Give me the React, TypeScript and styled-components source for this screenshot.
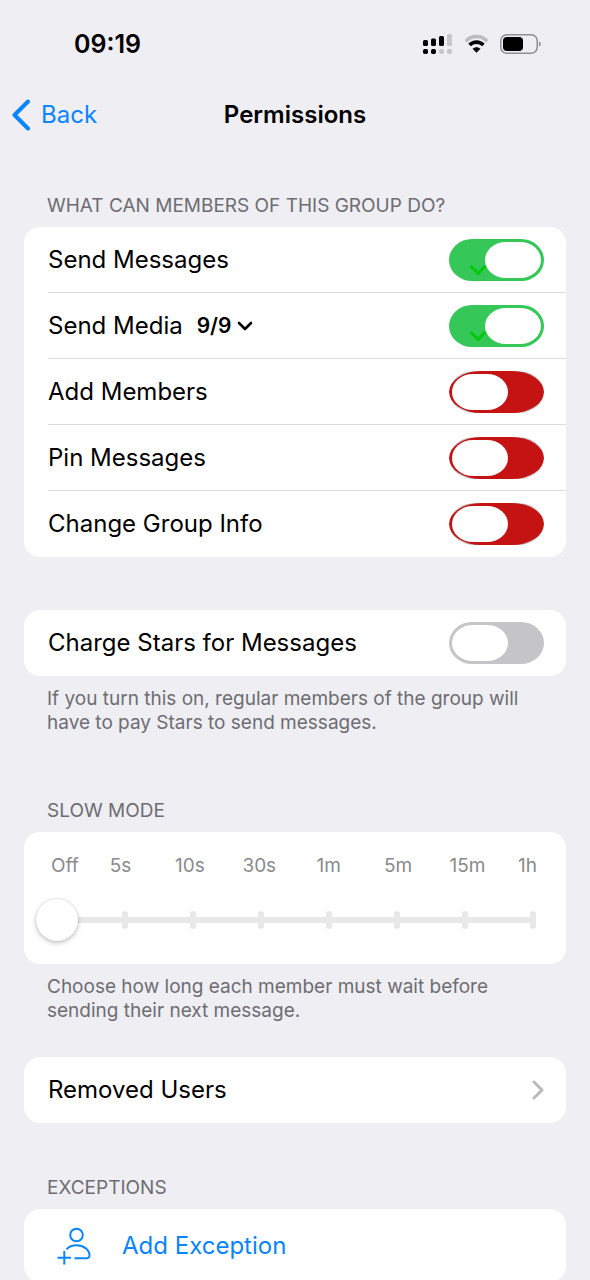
import React, { useState } from "react";
import styled, { createGlobalStyle, css } from "styled-components";

const GlobalStyle = createGlobalStyle`
  *, *::before, *::after { box-sizing: border-box; }
  html { scrollbar-width: none; }
  body {
    margin: 0;
    background: #efeef3;
    color: #000;
    font-family: Inter, "Liberation Sans", sans-serif;
    -webkit-font-smoothing: antialiased;
  }
  button, input { font: inherit; color: inherit; }
`;

const Screen = styled.div`
  height: 100vh;
  overflow-y: auto;
  scrollbar-width: none;
`;

const StatusBar = styled.header`
  display: flex;
  align-items: center;
  justify-content: space-between;
  height: 88px;
  padding: 0 49px 0 74px;
`;

const Clock = styled.time`
  font-size: 25px;
  font-weight: 600;
  line-height: 32px;
`;

const StatusIcons = styled.div`
  display: flex;
  align-items: center;
  gap: 11px;
`;

const NavBar = styled.nav`
  display: grid;
  grid-template-columns: 1fr auto 1fr;
  align-items: center;
  height: 54px;
  padding: 0 12px;
`;

const BackLink = styled.a`
  display: flex;
  align-items: center;
  gap: 10px;
  justify-self: start;
  color: #0a84ff;
  font-size: 24px;
  line-height: 32px;
  text-decoration: none;
`;

const Title = styled.h1`
  margin: 0;
  font-size: 24px;
  font-weight: 600;
  line-height: 32px;
`;

const Content = styled.main`
  padding: 0 24px;
`;

const Section = styled.section<{ $gap: number }>`
  margin-top: ${(p) => p.$gap}px;
`;

const SectionTitle = styled.h2`
  margin: 0 0 9px;
  padding: 0 23px;
  color: #6d6d72;
  font-size: 19px;
  font-weight: 400;
  line-height: 24px;
  text-transform: uppercase;
`;

const Footnote = styled.p`
  margin: 11px 0 0;
  padding: 0 23px;
  color: #6d6d72;
  font-size: 19px;
  line-height: 24px;
`;

const Card = styled.div`
  overflow: hidden;
  border-radius: 16px;
  background: #fff;
`;

const rowBase = css`
  display: flex;
  align-items: center;
  width: 100%;
  height: 66px;
  font-size: 24px;
  line-height: 32px;
`;

const SwitchRow = styled.div`
  ${rowBase}
  width: auto;
  margin-left: 24px;
  padding-right: 22px;

  &:not(:last-child) {
    border-bottom: 1px solid #dcdbe0;
  }
`;

const RowLabel = styled.label<{ $inline?: boolean }>`
  margin-right: ${(p) => (p.$inline ? "14px" : "auto")};
`;

const CountButton = styled.button`
  display: flex;
  align-items: center;
  gap: 5px;
  margin: 0 auto 0 0;
  padding: 0;
  border: 0;
  background: none;
  font-size: 21px;
  font-weight: 600;
  line-height: 32px;
`;

const LinkRow = styled.button<{ $accent?: boolean }>`
  ${rowBase}
  justify-content: ${(p) => (p.$accent ? "flex-start" : "space-between")};
  gap: 31px;
  height: ${(p) => (p.$accent ? 73 : 66)}px;
  padding: ${(p) => (p.$accent ? "0 33px" : "0 22px 0 24px")};
  border: 0;
  background: none;
  color: ${(p) => (p.$accent ? "#0a84ff" : "#000")};
  text-align: left;
`;

type Tone = "permission" | "plain";

const Toggle = styled.input<{ $tone: Tone }>`
  appearance: none;
  position: relative;
  flex: none;
  overflow: hidden;
  width: 95px;
  height: 42px;
  margin: 0;
  border-radius: ${(p) => (p.$tone === "permission" ? "26px / 21px" : "23px / 21px")};
  background: #c5c5c7;

  &::before {
    content: "";
    position: absolute;
    z-index: 1;
    top: 3px;
    left: 3px;
    width: 56px;
    height: 36px;
    border-radius: 21px / 18px;
    background: #fff;
  }

  &::after {
    content: "";
    position: absolute;
    inset: 0;
    border-radius: 32px / 21px;
    background: ${(p) => (p.$tone === "permission" ? "#c51314" : "none")};
  }

  &:checked {
    border-radius: 23px / 21px;
    background: #36c759;
  }

  &:checked::before {
    left: 36px;
  }

  &:checked::after {
    inset: 22px auto auto 23px;
    width: 12px;
    height: 12px;
    border: solid #00c80c;
    border-width: 0 3px 3px 0;
    border-radius: 0;
    background: none;
    transform: rotate(45deg);
  }
`;

const SlowModePanel = styled(Card)`
  padding: 22px 12px;
`;

const StepLabels = styled.div`
  display: flex;
  justify-content: space-between;
  padding: 0 17px 0 15px;
  color: #8a8a8e;
  font-size: 19px;
  line-height: 24px;
`;

const StepLabel = styled.span`
  display: flex;
  justify-content: center;
  width: 0;

  &:first-child { justify-content: flex-start; }
  &:last-child { justify-content: flex-end; }
`;

const SliderStack = styled.div`
  display: grid;
  align-items: center;
  height: 44px;
  margin-top: 20px;

  & > * { grid-area: 1 / 1; }
`;

const Ticks = styled.div`
  display: flex;
  align-items: center;
  justify-content: space-between;
  margin: 0 18px;
  background: linear-gradient(#e8e8e9, #e8e8e9) center / 100% 6px no-repeat;
`;

const Tick = styled.span`
  width: 6px;
  height: 18px;
  border-radius: 3px;
  background: #e8e8e9;
`;

const Range = styled.input`
  appearance: none;
  width: 100%;
  height: 42px;
  margin: 0;
  background: none;

  &::-webkit-slider-thumb {
    appearance: none;
    width: 42px;
    height: 42px;
    border-radius: 50%;
    background: #fff;
    box-shadow: 0 2px 5px rgba(0, 0, 0, 0.22), 0 0 2px rgba(0, 0, 0, 0.16);
  }
`;

const SignalIcon = () => (
  <svg width="30" height="21" viewBox="0 0 30 21" aria-hidden="true">
    <g fill="#000">
      <rect x="0" y="6" width="5" height="6" rx="1.5" />
      <rect x="8" y="4.5" width="5" height="7.5" rx="1.5" />
      <rect x="16" y="2" width="5" height="10" rx="1.5" />
      <rect x="0" y="15" width="5" height="5" rx="1.7" />
      <rect x="8" y="15" width="5" height="5" rx="1.7" />
    </g>
    <g fill="#c6c6ca">
      <rect x="24" y="0" width="5" height="12" rx="1.5" />
      <rect x="16" y="15" width="5" height="5" rx="2" />
      <rect x="24" y="15" width="5" height="5" rx="2" />
    </g>
  </svg>
);

const WifiIcon = () => (
  <svg width="25" height="20" viewBox="0 0 25 20" fill="none" aria-hidden="true">
    <path d="M1.8 7.2C7.6.9 17.4.9 23.2 7.2" stroke="#bdbdc1" strokeWidth="3.6" />
    <path d="M5.6 11.1c3.8-4 10-4 13.8 0" stroke="#000" strokeWidth="3.6" />
    <path d="M12.5 18.8 8.5 14.8c2.3-2.2 5.7-2.2 8 0z" fill="#000" />
  </svg>
);

const BatteryIcon = () => (
  <svg width="41" height="20" viewBox="0 0 41 20" aria-hidden="true">
    <rect x="0.75" y="0.75" width="36.5" height="18.5" rx="6" fill="none" stroke="#8f8f93" strokeWidth="1.5" />
    <rect x="3" y="3" width="20" height="14" rx="4" fill="#000" />
    <path d="M39 7.5c2.400 1 2.400 4 0 5z" fill="#8f8f93" />
  </svg>
);

const BackIcon = () => (
  <svg width="19" height="32" viewBox="0 0 19 32" fill="none" aria-hidden="true">
    <path d="M16 2.500 2.500 16 16 29.500" stroke="#0a84ff" strokeWidth="4" strokeLinecap="round" strokeLinejoin="round" />
  </svg>
);

const DownIcon = () => (
  <svg width="16" height="10" viewBox="0 0 16 10" fill="none" aria-hidden="true">
    <path d="m2 2 6 6 6-6" stroke="#000" strokeWidth="2.6" strokeLinecap="round" strokeLinejoin="round" />
  </svg>
);

const ForwardIcon = () => (
  <svg width="12" height="20" viewBox="0 0 12 20" fill="none" aria-hidden="true">
    <path d="m2 2 8 8-8 8" stroke="#b9b9bc" strokeWidth="3" strokeLinecap="round" strokeLinejoin="round" />
  </svg>
);

const AddUserIcon = () => (
  <svg width="34" height="38" viewBox="0 0 34 38" fill="none" stroke="#0a84ff" strokeWidth="2" aria-hidden="true">
    <circle cx="19.5" cy="8" r="6.3" />
    <path d="M9.500 22.300c2.200-2.500 5.800-4 10-4 7 0 12.700 4.200 13 9.700.1 2.200-.8 3.200-2.500 3.200H17.500" />
    <path d="M.5 30.800h13.500M7.300 24v13.500" />
  </svg>
);

const permissions = [
  { id: "send-messages", label: "Send Messages", on: true },
  { id: "send-media", label: "Send Media", on: true, count: "9/9" },
  { id: "add-members", label: "Add Members", on: false },
  { id: "pin-messages", label: "Pin Messages", on: false },
  { id: "change-info", label: "Change Group Info", on: false },
];

const delays = ["Off", "5s", "10s", "30s", "1m", "5m", "15m", "1h"];

export default function App() {
  const [delay, setDelay] = useState(0);

  return (
    <Screen>
      <GlobalStyle />
      <StatusBar>
        <Clock>09:19</Clock>
        <StatusIcons>
          <SignalIcon />
          <WifiIcon />
          <BatteryIcon />
        </StatusIcons>
      </StatusBar>
      <NavBar>
        <BackLink href="#back">
          <BackIcon />
          Back
        </BackLink>
        <Title>Permissions</Title>
      </NavBar>
      <Content>
        <Section $gap={52}>
          <SectionTitle>What can members of this group do?</SectionTitle>
          <Card>
            {permissions.map(({ id, label, on, count }) => (
              <SwitchRow key={id}>
                <RowLabel htmlFor={id} $inline={Boolean(count)}>
                  {label}
                </RowLabel>
                {count && (
                  <CountButton type="button">
                    {count}
                    <DownIcon />
                  </CountButton>
                )}
                <Toggle id={id} type="checkbox" role="switch" defaultChecked={on} $tone="permission" />
              </SwitchRow>
            ))}
          </Card>
        </Section>

        <Section $gap={53}>
          <Card>
            <SwitchRow>
              <RowLabel htmlFor="charge-stars">Charge Stars for Messages</RowLabel>
              <Toggle id="charge-stars" type="checkbox" role="switch" $tone="plain" />
            </SwitchRow>
          </Card>
          <Footnote>
            If you turn this on, regular members of the group will have to pay Stars to send messages.
          </Footnote>
        </Section>

        <Section $gap={64}>
          <SectionTitle id="slow-mode">Slow mode</SectionTitle>
          <SlowModePanel>
            <StepLabels>
              {delays.map((d) => (
                <StepLabel key={d}>{d}</StepLabel>
              ))}
            </StepLabels>
            <SliderStack>
              <Ticks>
                {delays.map((d) => (
                  <Tick key={d} />
                ))}
              </Ticks>
              <Range
                type="range"
                min={0}
                max={delays.length - 1}
                value={delay}
                aria-labelledby="slow-mode"
                aria-valuetext={delays[delay]}
                onChange={(e) => setDelay(Number(e.target.value))}
              />
            </SliderStack>
          </SlowModePanel>
          <Footnote>
            Choose how long each member must wait before sending their next message.
          </Footnote>
        </Section>

        <Section $gap={34}>
          <Card>
            <LinkRow type="button">
              Removed Users
              <ForwardIcon />
            </LinkRow>
          </Card>
        </Section>

        <Section $gap={53}>
          <SectionTitle>Exceptions</SectionTitle>
          <Card>
            <LinkRow type="button" $accent>
              <AddUserIcon />
              Add Exception
            </LinkRow>
          </Card>
        </Section>
      </Content>
    </Screen>
  );
}
